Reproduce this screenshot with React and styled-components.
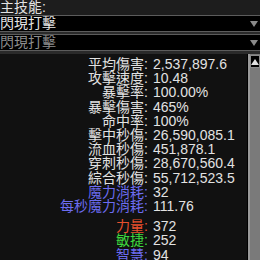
import React from "react";
import styled, { createGlobalStyle } from "styled-components";

const Global = createGlobalStyle`
  html, body { margin: 0; padding: 0; background: #111; overflow: hidden; }
  #root { width: 260px; height: 260px; }
`;

const Root = styled.div`
  width: 260px;
  height: 260px;
  overflow: hidden;
  background: #111;
  font-family: "Liberation Sans", "Noto Sans CJK TC", sans-serif;
  font-size: 14px;
  color: #e2e2e2;
  display: flex;
  flex-direction: column;
`;

const Header = styled.div`
  height: 15px;
  line-height: 15px;
  background: #1d1d1d;
  white-space: nowrap;
`;

const Band = styled.div`
  height: ${(p) => p.$h}px;
  background: #2a2a2a;
`;

const Select = styled.div`
  height: 15px;
  border-top: 1px solid #5c5c5c;
  border-bottom: 1px solid #5c5c5c;
  background: #000;
  display: flex;
  align-items: center;
  justify-content: space-between;
  color: ${(p) => (p.$disabled ? "#8e8e8e" : "#e6e6e6")};
  line-height: 15px;
`;

const Arrow = styled.span`
  width: 0;
  height: 0;
  margin-right: 2px;
  border-left: 4px solid transparent;
  border-right: 4px solid transparent;
  border-top: 6px solid #8a8a8a;
`;

const Panel = styled.div`
  flex: 1;
  display: flex;
  min-height: 0;
`;

const Stats = styled.div`
  flex: 1;
  display: grid;
  grid-template-columns: 148px 1fr;
  column-gap: 5px;
  align-content: start;
  padding-top: 3px;
  line-height: 14.2px;
  border-right: 1px solid #000;
`;

const Label = styled.div`
  text-align: right;
  white-space: nowrap;
  color: ${(p) => p.$color || "#e2e2e2"};
`;

const Value = styled.div`
  white-space: nowrap;
  color: #e2e2e2;
`;

const Gap = styled.div`
  grid-column: 1 / -1;
  height: 6px;
`;

const Scrollbar = styled.div`
  width: 12px;
  display: flex;
  flex-direction: column;
  background: #7a7a7a;
  border-left: 2px solid #9a9a9a;
  box-sizing: border-box;
`;

const UpButton = styled.div`
  height: 13px;
  margin-top: 1px;
  background: #000;
  border: 1px solid #8a8a8a;
  display: flex;
  align-items: center;
  justify-content: center;
  box-sizing: border-box;
`;

const UpTri = styled.span`
  width: 0;
  height: 0;
  border-left: 4px solid transparent;
  border-right: 4px solid transparent;
  border-bottom: 6px solid #e0e0e0;
`;

const stats = [
  ["平均傷害:", "2,537,897.6"],
  ["攻擊速度:", "10.48"],
  ["暴擊率:", "100.00%"],
  ["暴擊傷害:", "465%"],
  ["命中率:", "100%"],
  ["擊中秒傷:", "26,590,085.1"],
  ["流血秒傷:", "451,878.1"],
  ["穿刺秒傷:", "28,670,560.4"],
  ["綜合秒傷:", "55,712,523.5"],
  ["魔力消耗:", "32", "#6c6cf0"],
  ["每秒魔力消耗:", "111.76", "#6c6cf0"],
  null,
  ["力量:", "372", "#e8502e"],
  ["敏捷:", "252", "#3ed83e"],
  ["智慧:", "94", "#6c6cf0"],
];

export default function App() {
  return (
    <Root>
      <Global />
      <Header>主技能:</Header>
      <Select>
        <span>閃現打擊</span>
        <Arrow />
      </Select>
      <Band $h={2} />
      <Select $disabled>
        <span>閃現打擊</span>
        <Arrow />
      </Select>
      <Band $h={3} />
      <Panel>
        <Stats>
          {stats.map((s, i) =>
            s ? (
              <React.Fragment key={i}>
                <Label $color={s[2]}>{s[0]}</Label>
                <Value>{s[1]}</Value>
              </React.Fragment>
            ) : (
              <Gap key={i} />
            )
          )}
        </Stats>
        <Scrollbar>
          <UpButton>
            <UpTri />
          </UpButton>
        </Scrollbar>
      </Panel>
    </Root>
  );
}
